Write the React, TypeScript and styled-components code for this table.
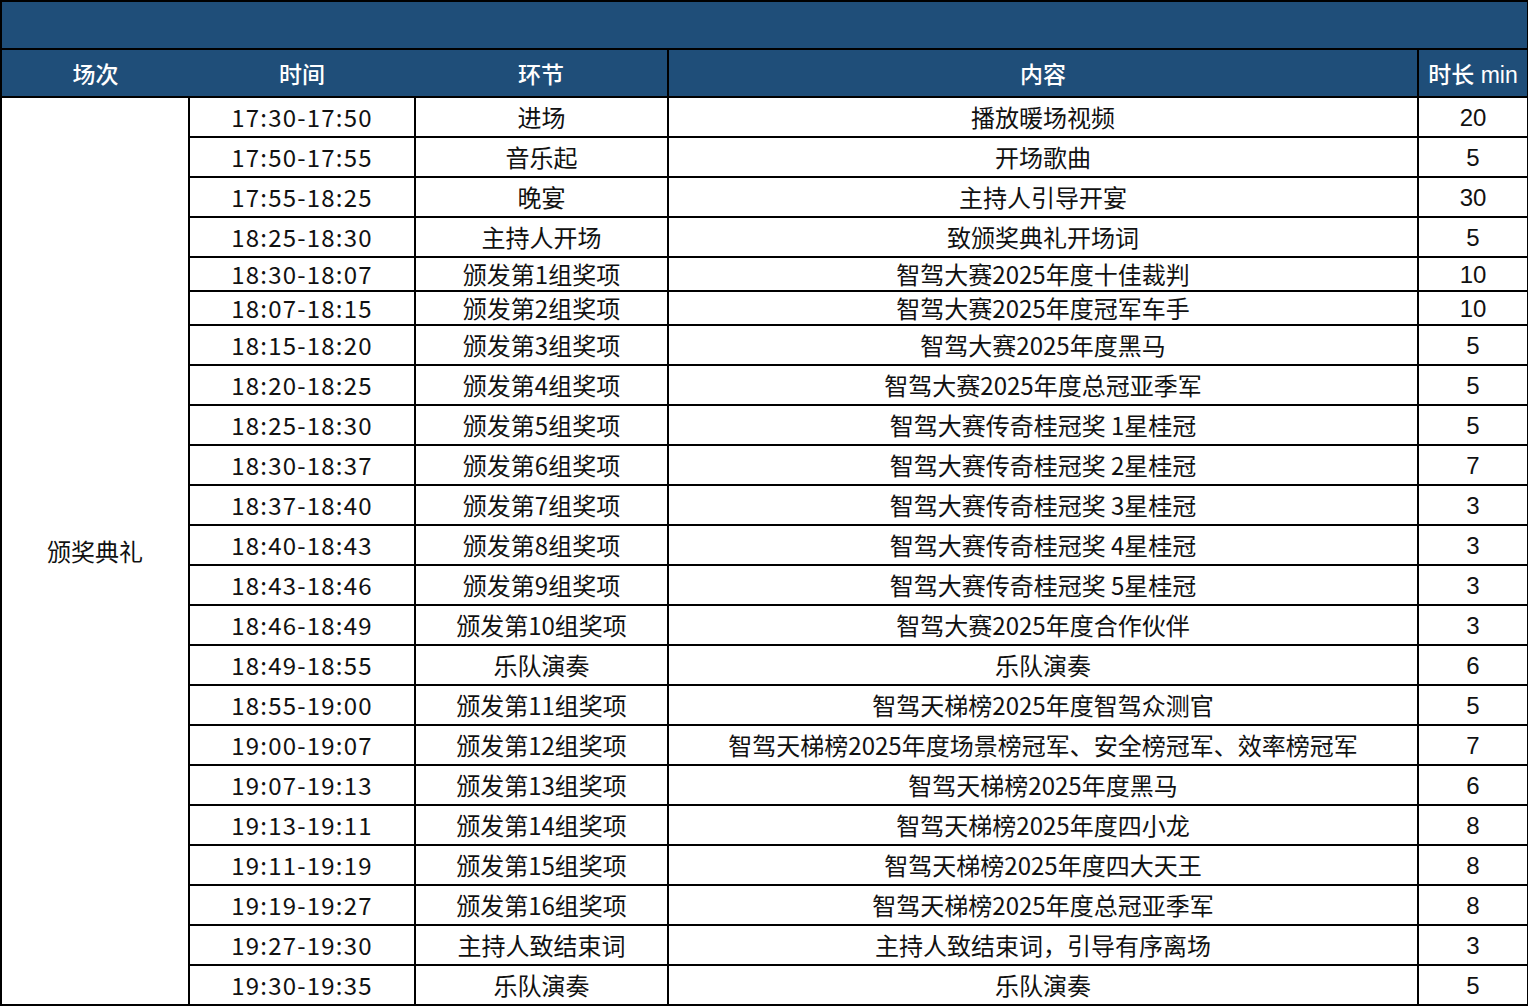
import styled, { createGlobalStyle } from "styled-components"

const GlobalStyle = createGlobalStyle`
  html, body {
    margin: 0;
    padding: 0;
    background: #ffffff;
  }
  body {
    font-family: "Noto Sans CJK SC", "Noto Sans", sans-serif;
    color: #111111;
  }
`

type Row = {
  time: string
  part: string
  content: string
  minutes: number
  short?: boolean
}

const rows: Row[] = [
  { time: "17:30-17:50", part: "进场", content: "播放暖场视频", minutes: 20 },
  { time: "17:50-17:55", part: "音乐起", content: "开场歌曲", minutes: 5 },
  { time: "17:55-18:25", part: "晚宴", content: "主持人引导开宴", minutes: 30 },
  { time: "18:25-18:30", part: "主持人开场", content: "致颁奖典礼开场词", minutes: 5 },
  { time: "18:30-18:07", part: "颁发第1组奖项", content: "智驾大赛2025年度十佳裁判", minutes: 10, short: true },
  { time: "18:07-18:15", part: "颁发第2组奖项", content: "智驾大赛2025年度冠军车手", minutes: 10, short: true },
  { time: "18:15-18:20", part: "颁发第3组奖项", content: "智驾大赛2025年度黑马", minutes: 5 },
  { time: "18:20-18:25", part: "颁发第4组奖项", content: "智驾大赛2025年度总冠亚季军", minutes: 5 },
  { time: "18:25-18:30", part: "颁发第5组奖项", content: "智驾大赛传奇桂冠奖 1星桂冠", minutes: 5 },
  { time: "18:30-18:37", part: "颁发第6组奖项", content: "智驾大赛传奇桂冠奖 2星桂冠", minutes: 7 },
  { time: "18:37-18:40", part: "颁发第7组奖项", content: "智驾大赛传奇桂冠奖 3星桂冠", minutes: 3 },
  { time: "18:40-18:43", part: "颁发第8组奖项", content: "智驾大赛传奇桂冠奖 4星桂冠", minutes: 3 },
  { time: "18:43-18:46", part: "颁发第9组奖项", content: "智驾大赛传奇桂冠奖 5星桂冠", minutes: 3 },
  { time: "18:46-18:49", part: "颁发第10组奖项", content: "智驾大赛2025年度合作伙伴", minutes: 3 },
  { time: "18:49-18:55", part: "乐队演奏", content: "乐队演奏", minutes: 6 },
  { time: "18:55-19:00", part: "颁发第11组奖项", content: "智驾天梯榜2025年度智驾众测官", minutes: 5 },
  { time: "19:00-19:07", part: "颁发第12组奖项", content: "智驾天梯榜2025年度场景榜冠军、安全榜冠军、效率榜冠军", minutes: 7 },
  { time: "19:07-19:13", part: "颁发第13组奖项", content: "智驾天梯榜2025年度黑马", minutes: 6 },
  { time: "19:13-19:11", part: "颁发第14组奖项", content: "智驾天梯榜2025年度四小龙", minutes: 8 },
  { time: "19:11-19:19", part: "颁发第15组奖项", content: "智驾天梯榜2025年度四大天王", minutes: 8 },
  { time: "19:19-19:27", part: "颁发第16组奖项", content: "智驾天梯榜2025年度总冠亚季军", minutes: 8 },
  { time: "19:27-19:30", part: "主持人致结束词", content: "主持人致结束词，引导有序离场", minutes: 3 },
  { time: "19:30-19:35", part: "乐队演奏", content: "乐队演奏", minutes: 5 },
]

const App = () => {
  return (
    <>
      <GlobalStyle />
      <S.Sheet>
        <colgroup>
          <col style={{ width: 188 }} />
          <col style={{ width: 226 }} />
          <col style={{ width: 253 }} />
          <col style={{ width: 750 }} />
          <col style={{ width: 110 }} />
        </colgroup>
        <thead>
          <S.TitleRow>
            <S.TitleCell colSpan={5} />
          </S.TitleRow>
          <S.HeadRow>
            <S.HeadCell $openRight>场次</S.HeadCell>
            <S.HeadCell $openLeft $openRight>时间</S.HeadCell>
            <S.HeadCell $openLeft>环节</S.HeadCell>
            <S.HeadCell>内容</S.HeadCell>
            <S.HeadCell $latin>时长 min</S.HeadCell>
          </S.HeadRow>
        </thead>
        <tbody>
          {rows.map((row, i) => (
            <S.BodyRow key={row.time + i} $short={row.short}>
              {i === 0 && <S.Cell rowSpan={rows.length}>颁奖典礼</S.Cell>}
              <S.Cell $variant="time">{row.time}</S.Cell>
              <S.Cell>{row.part}</S.Cell>
              <S.Cell>{row.content}</S.Cell>
              <S.Cell $variant="num">{row.minutes}</S.Cell>
            </S.BodyRow>
          ))}
        </tbody>
      </S.Sheet>
    </>
  )
}

const S = {
  Sheet: styled.table`
    width: 1527px;
    table-layout: fixed;
    border-collapse: collapse;
    border: 2px solid #000000;
  `,
  TitleRow: styled.tr`
    height: 48px;
  `,
  TitleCell: styled.td`
    background: #1f4e79;
    border: 2px solid #000000;
    padding: 0;
  `,
  HeadRow: styled.tr`
    height: 48px;
  `,
  HeadCell: styled.th<{ $openLeft?: boolean; $openRight?: boolean; $latin?: boolean }>`
    background: #1f4e79;
    color: #ffffff;
    font-family: ${(p) =>
      p.$latin
        ? `"Liberation Sans", "Noto Sans CJK SC", sans-serif`
        : `"Noto Sans CJK SC", sans-serif`};
    font-size: 23px;
    font-weight: 500;
    text-align: center;
    vertical-align: middle;
    padding: 0;
    white-space: nowrap;
    border: 2px solid #000000;
    ${(p) => (p.$openLeft ? "border-left: hidden;" : "")}
    ${(p) => (p.$openRight ? "border-right: hidden;" : "")}
  `,
  BodyRow: styled.tr<{ $short?: boolean }>`
    height: ${(p) => (p.$short ? 34 : 40)}px;
  `,
  Cell: styled.td<{ $variant?: "time" | "num" }>`
    border: 2px solid #000000;
    padding: 0;
    padding-top: ${(p) => (p.$variant === "num" ? "2px" : "0")};
    text-align: center;
    vertical-align: middle;
    white-space: nowrap;
    font-size: 24px;
    line-height: 1;
    color: #111111;
    font-family: ${(p) =>
      p.$variant === "num"
        ? `"Liberation Sans", sans-serif`
        : `"Noto Sans CJK SC", sans-serif`};
    letter-spacing: ${(p) => (p.$variant === "time" ? "1.2px" : "0")};
  `,
}

export default App
